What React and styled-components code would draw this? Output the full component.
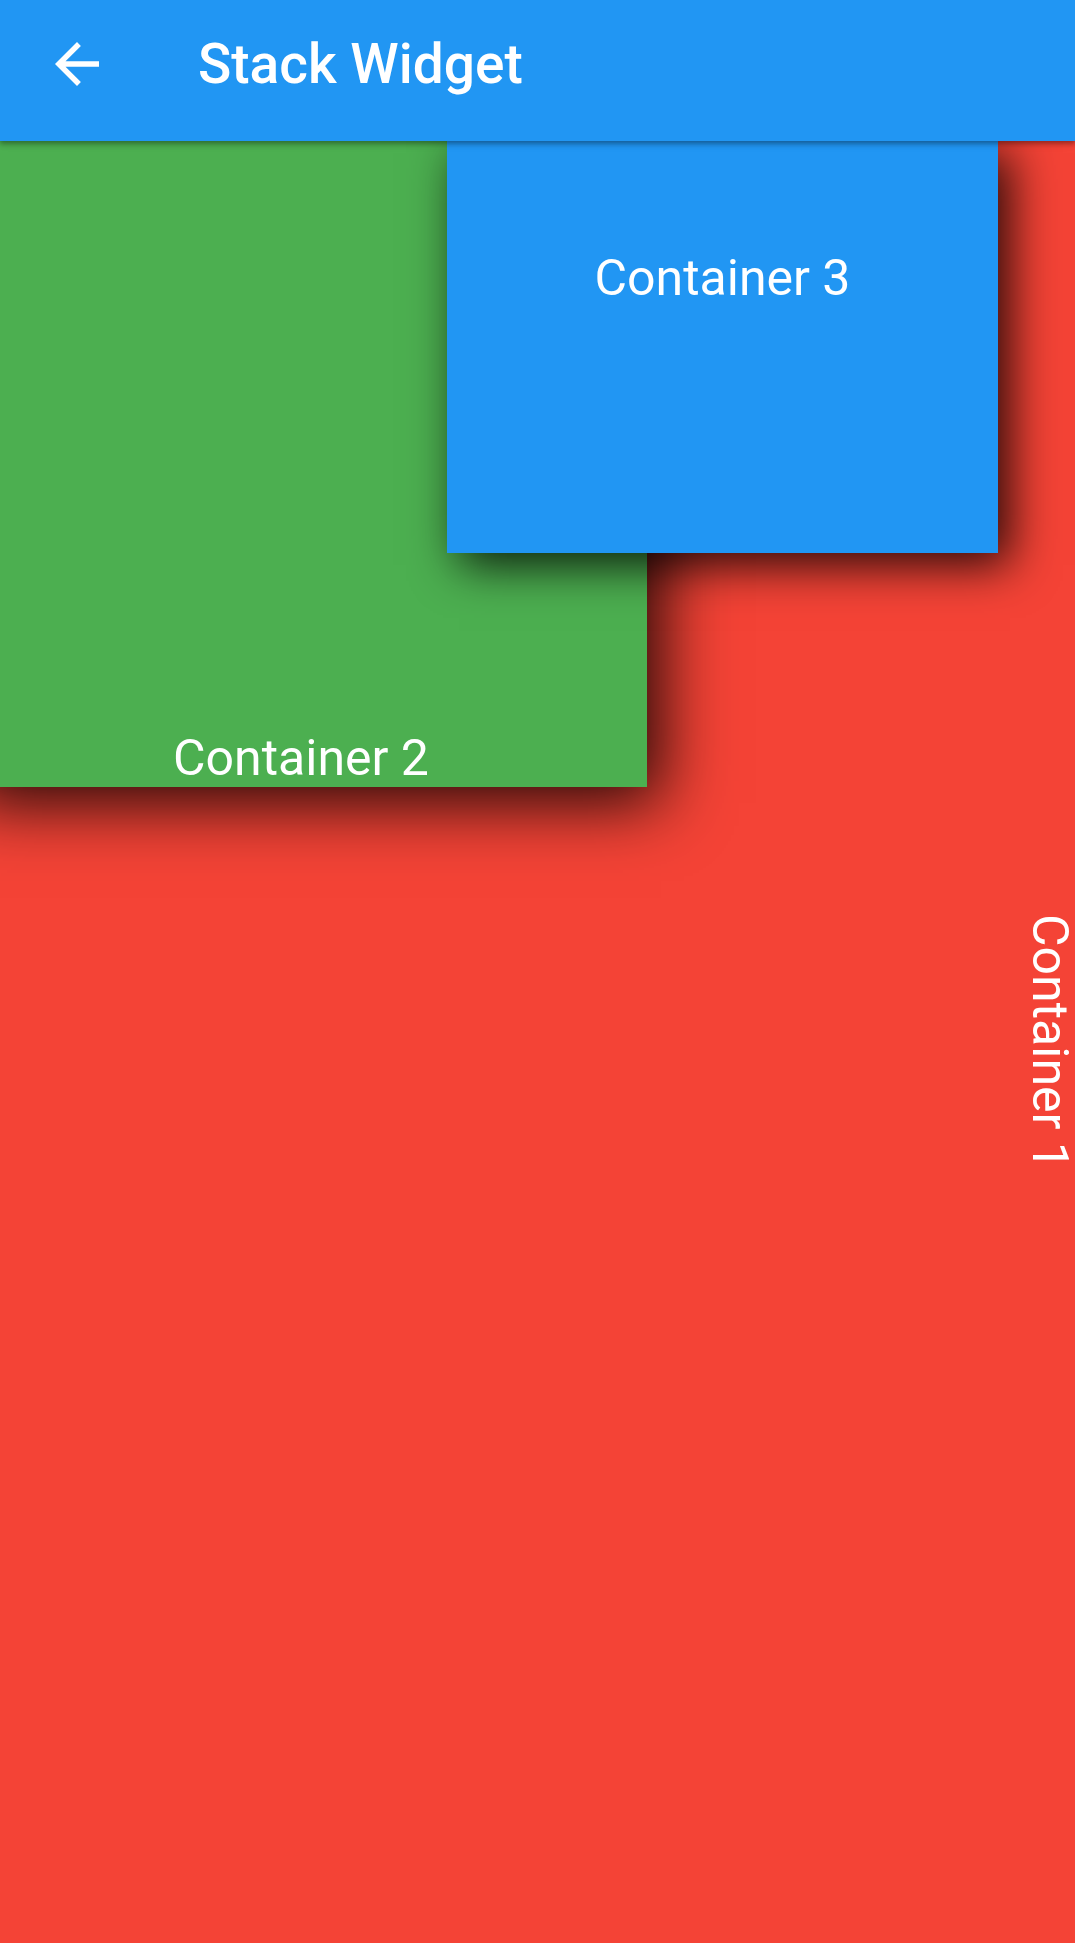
import React from "react";
import styled, { createGlobalStyle } from "styled-components";

const GlobalStyle = createGlobalStyle`
  html, body {
    margin: 0;
    padding: 0;
  }
  body {
    font-family: Roboto, "Liberation Sans", sans-serif;
    background-color: rgb(244, 67, 54);
  }
`;

const Screen = styled.div`
  display: flex;
  flex-direction: column;
  width: 1075px;
  height: 1943px;
  overflow: hidden;
`;

const AppBar = styled.header`
  position: relative;
  z-index: 2;
  height: 141px;
  flex-shrink: 0;
  background-color: rgb(33, 150, 243);
  box-shadow: 0px 2px 4px rgba(0, 0, 0, 0.2), 0px 4px 5px rgba(0, 0, 0, 0.14),
    0px 1px 10px rgba(0, 0, 0, 0.12);
`;

const Toolbar = styled.div`
  display: flex;
  align-items: center;
  height: 128px;
  padding-left: 44px;
`;

const BackButton = styled.button`
  display: flex;
  align-items: center;
  justify-content: center;
  width: 66px;
  height: 66px;
  padding: 0;
  border: none;
  background: none;
  color: white;
`;

const Title = styled.h1`
  margin: 0 0 0 88px;
  font-size: 55px;
  font-weight: 500;
  color: white;
`;

const Body = styled.main`
  flex: 1;
  display: grid;
  grid-template-columns: 1fr;
  grid-template-rows: 1fr;
  overflow: hidden;
`;

const Box = styled.div`
  grid-area: 1 / 1;
  display: flex;
  background-color: ${(p) => p.color};
`;

const Back = styled(Box)`
  align-items: center;
  justify-content: flex-end;
  padding-right: 1px;
`;

const Middle = styled(Box)`
  justify-self: start;
  align-self: start;
  width: 692px;
  height: 646px;
  margin-left: -45px;
  flex-direction: column;
  justify-content: flex-end;
  align-items: center;
  box-shadow: 14px 16px 64px rgba(0, 0, 0, 0.88);
`;

const Front = styled(Box)`
  justify-self: start;
  align-self: start;
  width: 551px;
  height: 412px;
  margin-left: 447px;
  box-sizing: border-box;
  padding-top: 108px;
  justify-content: center;
  align-items: flex-start;
  box-shadow: 12px 12px 44px rgba(0, 0, 0, 0.85);
`;

const Label = styled.span`
  font-size: 50px;
  line-height: ${(p) => (p.vertical ? "48px" : "normal")};
  color: white;
  writing-mode: ${(p) => (p.vertical ? "vertical-rl" : "horizontal-tb")};
`;

function ArrowBack() {
  return (
    <svg width="66" height="66" viewBox="0 0 24 24" fill="currentColor">
      <path d="M20 11H7.83l5.59-5.59L12 4l-8 8 8 8 1.41-1.41L7.83 13H20v-2z" />
    </svg>
  );
}

export default function App() {
  return (
    <>
      <GlobalStyle />
      <Screen>
        <AppBar>
          <Toolbar>
            <BackButton aria-label="Back">
              <ArrowBack />
            </BackButton>
            <Title>Stack Widget</Title>
          </Toolbar>
        </AppBar>
        <Body>
          <Back color="rgb(244, 67, 54)">
            <Label vertical>Container 1</Label>
          </Back>
          <Middle color="rgb(76, 175, 80)">
            <Label>Container 2</Label>
          </Middle>
          <Front color="rgb(33, 150, 243)">
            <Label>Container 3</Label>
          </Front>
        </Body>
      </Screen>
    </>
  );
}
